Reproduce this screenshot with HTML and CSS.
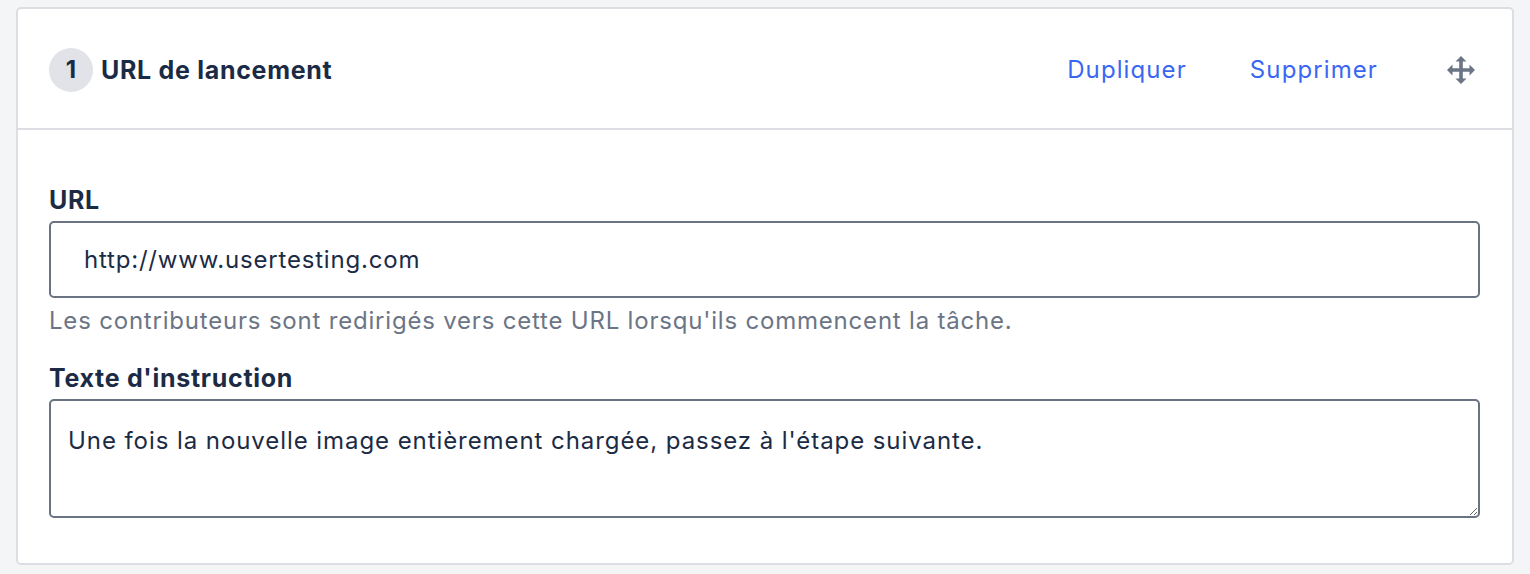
FILE: index.html
```html
<!DOCTYPE html>
<html lang="fr">
<head>
<meta charset="utf-8">
<title>URL de lancement</title>
<link rel="stylesheet" href="styles.css">
</head>
<body>
<section class="task-card">
  <header class="task-head">
    <div class="task-title">
      <span class="step-badge">1</span>
      <h2 class="task-name">URL de lancement</h2>
    </div>
    <nav class="task-actions">
      <a class="action-link" href="#">Dupliquer</a>
      <a class="action-link" href="#">Supprimer</a>
      <span class="drag-handle" aria-label="Déplacer">
        <svg width="28" height="28" viewBox="0 0 28 28">
          <path fill="#6b7585" d="M14 0 L19.5 5.5 L15.8 5.5 L15.8 12.2 L22.5 12.2 L22.5 8.5 L28 14 L22.5 19.5 L22.5 15.8 L15.8 15.8 L15.8 22.5 L19.5 22.5 L14 28 L8.5 22.5 L12.2 22.5 L12.2 15.8 L5.5 15.8 L5.5 19.5 L0 14 L5.5 8.5 L5.5 12.2 L12.2 12.2 L12.2 5.5 L8.5 5.5 Z"/>
        </svg>
      </span>
    </nav>
  </header>
  <div class="task-body">
    <label class="field-label" for="launch-url">URL</label>
    <input class="text-input" id="launch-url" type="text" value="http://www.usertesting.com">
    <p class="field-help">Les contributeurs sont redirigés vers cette URL lorsqu'ils commencent la tâche.</p>
    <label class="field-label" for="instructions">Texte d'instruction</label>
    <textarea class="text-area" id="instructions">Une fois la nouvelle image entièrement chargée, passez à l'étape suivante.</textarea>
  </div>
</section>
</body>
</html>
```

FILE: styles.css
```css
* { box-sizing: border-box; }

html, body {
  margin: 0;
  background: #f4f5f7;
}

body {
  padding: 7px 16px 0 16px;
  font-family: "Inter", "Liberation Sans", sans-serif;
  color: #1c2b45;
}

.task-card {
  background: #fff;
  border: 2px solid #dcdee3;
  border-radius: 5px;
}

/* header row: step number + title on the left, actions on the right */
.task-head {
  display: flex;
  align-items: center;
  justify-content: space-between;
  height: 121px;
  padding: 2px 37px 0 31px;
  border-bottom: 2px solid #dcdee3;
}

.task-title {
  display: flex;
  align-items: center;
  gap: 8px;
}

.step-badge {
  width: 44px;
  height: 44px;
  border-radius: 50%;
  background: #e1e3e8;
  display: flex;
  align-items: center;
  justify-content: center;
  font-weight: 700;
  font-size: 24px;
}

.task-name {
  margin: 0;
  font-size: 25px;
  font-weight: 700;
  letter-spacing: 0.7px;
  line-height: 30px;
}

.task-actions {
  display: flex;
  align-items: center;
  gap: 63px;
}

.action-link {
  color: #3a67f2;
  text-decoration: none;
  font-size: 24px;
  letter-spacing: 1.1px;
  line-height: 30px;
}

.drag-handle {
  display: flex;
  width: 28px;
  height: 28px;
  margin-left: 6px;
}

/* form fields */
.task-body {
  display: flex;
  flex-direction: column;
  padding: 55px 32px 45px 31px;
}

.field-label {
  font-weight: 700;
  font-size: 25px;
  letter-spacing: 0.7px;
  line-height: 30px;
  margin-bottom: 6px;
}

.text-input,
.text-area {
  font-family: inherit;
  color: #1c2b45;
  font-size: 24px;
  letter-spacing: 0.8px;
  line-height: 30px;
  border: 2px solid #697384;
  border-radius: 5px;
  background: #fff;
  margin: 0;
}

.text-input {
  height: 77px;
  padding: 0 33px;
}

.text-area {
  height: 119px;
  padding: 25px 17px 20px;
  letter-spacing: 0.93px;
  resize: vertical;
}

.field-help {
  margin: 8px 0 27px;
  font-size: 24px;
  letter-spacing: 0.8px;
  line-height: 30px;
  color: #6b7585;
}
```
